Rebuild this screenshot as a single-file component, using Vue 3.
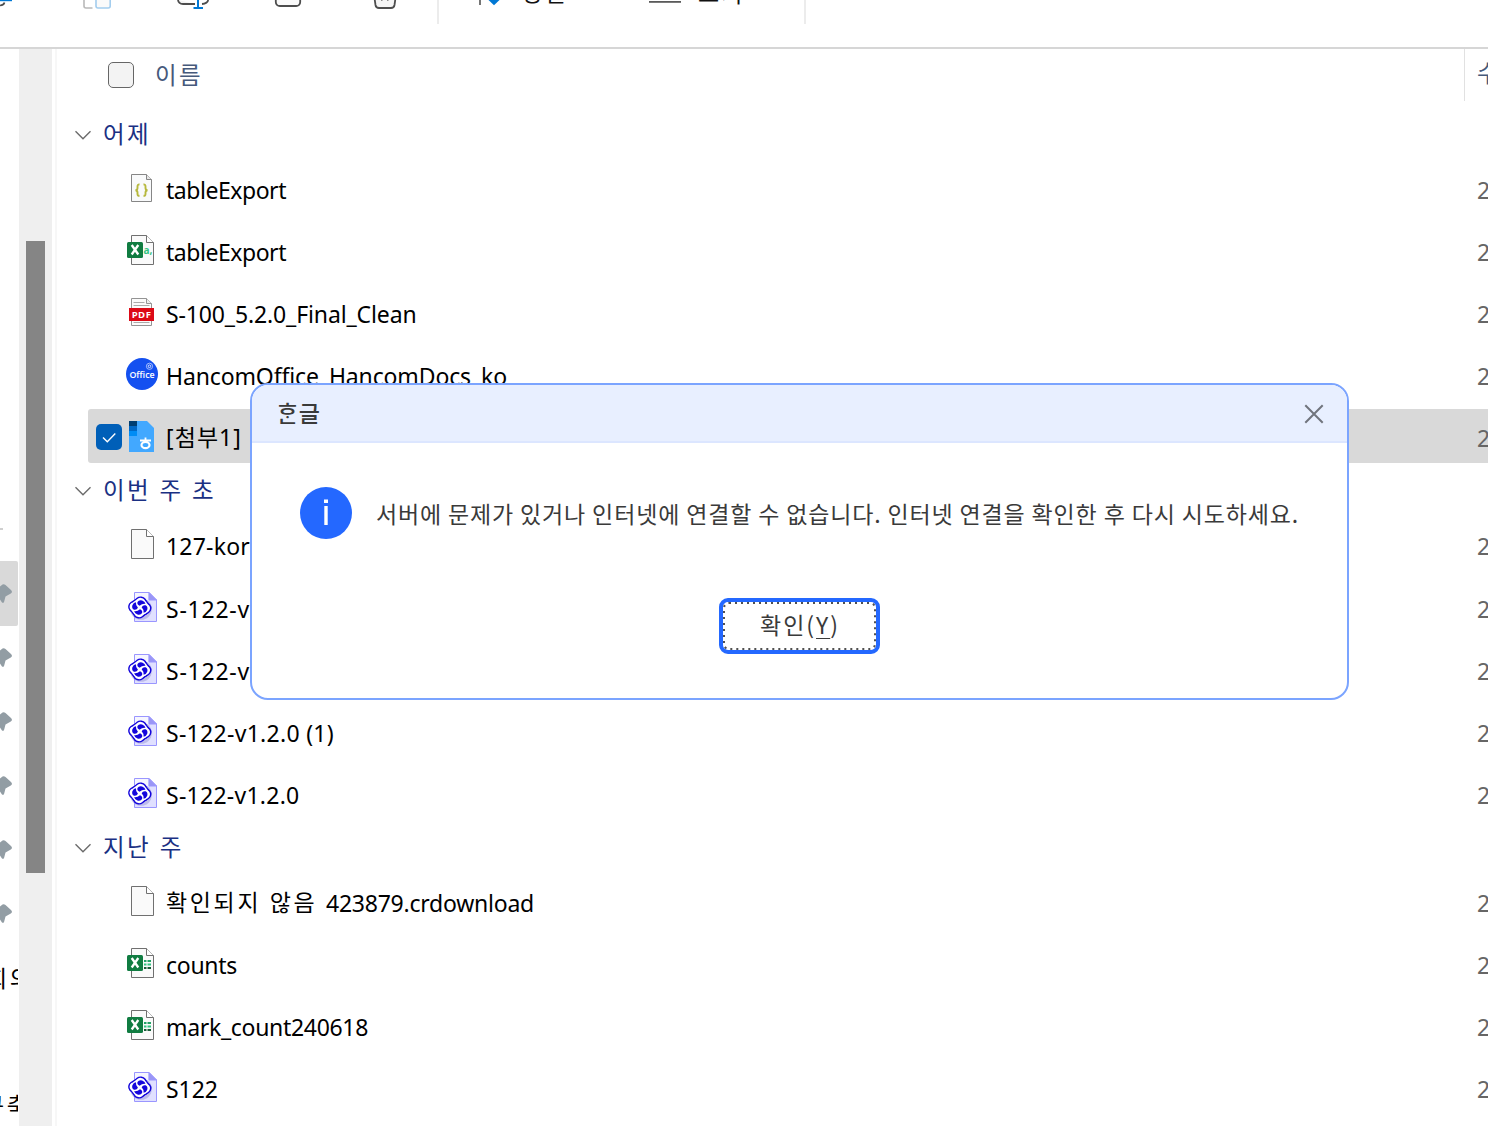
<script setup>
const fit = (el, { value }) => {
  const chars = [...el.textContent].length
  el.style.letterSpacing = '0px'
  const natural = el.getBoundingClientRect().width
  el.style.letterSpacing = (value - natural) / chars + 'px'
}
const vFit = { mounted: fit }

const groups = [
  {
    title: '어제', width: 48,
    rows: [
      { icon: 'json', name: 'tableExport', width: 120 },
      { icon: 'csv', name: 'tableExport', width: 120 },
      { icon: 'pdf', name: 'S-100_5.2.0_Final_Clean', width: 250.5 },
      { icon: 'office', name: 'HancomOffice_HancomDocs_ko', width: 341 },
      { icon: 'hwp', name: '[첨부1]', width: 76, selected: true },
    ],
  },
  {
    title: '이번 주 초', width: 113, loose: true,
    rows: [
      { icon: 'file', name: '127-kor', width: 84 },
      { icon: 'xsd', name: 'S-122-v', width: 84 },
      { icon: 'xsd', name: 'S-122-v', width: 84 },
      { icon: 'xsd', name: 'S-122-v1.2.0 (1)', width: 168 },
      { icon: 'xsd', name: 'S-122-v1.2.0', width: 133.5 },
    ],
  },
  {
    title: '지난 주', width: 81,
    rows: [
      { icon: 'file', korean: '확인되지 않음', name: '423879.crdownload', width: 208 },
      { icon: 'xls', name: 'counts', width: 71 },
      { icon: 'xls', name: 'mark_count240618', width: 202 },
      { icon: 'xsd', name: 'S122', width: 52 },
    ],
  },
]
const petals = [20, 110, 200, 290]
const lobes = [8, 98, 188, 278]
</script>

<template>
  <div class="screen">
    <header class="toolbar">
      <svg class="tools" width="437" height="24" viewBox="0 0 437 24" fill="none">
        <path d="M0 5.500Q4 5 4.500 2.500" stroke="#4d4d4d" stroke-width="1.600" />
        <path d="M0 .3H12" stroke="#0078d4" stroke-width="1.800" />
        <path d="M84 -4V6Q84 8 86 8H92.500" stroke="#b9b9b9" stroke-width="1.600" />
        <rect x="96" y="-12" width="14.200" height="20" rx="2" fill="#fafafa" stroke="#a3cdee" stroke-width="1.600" />
        <path d="M178 0Q178.500 4 183 4H195M202 4Q207.500 3.500 208.200 0" fill="#f3f3f3" stroke="#4d4d4d" stroke-width="1.800" />
        <path d="M198 -4V8M193.500 8H203" stroke="#0078d4" stroke-width="2" />
        <rect x="275.800" y="-16" width="24.400" height="22" rx="4" fill="#fafafa" stroke="#4d4d4d" stroke-width="1.800" />
        <path d="M374.500 -2L375.500 5Q376 8 379 8H391Q394 8 394.500 5L395.500 -2" fill="#f5f5f5" stroke="#4d4d4d" stroke-width="1.800" />
        <path d="M381.800 -2V1M387.800 -2V1" stroke="#777" stroke-width="1.200" />
      </svg>
      <div class="cmd sort">
        <svg width="24" height="8" viewBox="0 0 24 8" fill="none">
          <path d="M1 -2V5" stroke="#666" stroke-width="1.800" />
          <path d="M9.500 0H20.500L15 5.200Z" fill="#0078d4" />
        </svg>
        <span>정렬</span>
      </div>
      <div class="cmd view">
        <svg width="32" height="8" viewBox="0 0 32 8"><path d="M0 1.900H32" stroke="#5a5a5a" stroke-width="1.800" /></svg>
        <span>보기</span>
      </div>
    </header>

    <div class="body">
      <aside class="nav">
        <i class="rule"></i>
        <div class="pins">
          <div v-for="n in 6" :key="n" class="pin" :class="{ on: n === 1 }">
            <svg width="13" height="20" viewBox="0 0 13 20">
              <path d="M0 2.500L2.500 .5Q4 -.3 5.500 1L11 6Q13 8 10.800 9.500L5.500 12.500 4.200 17.500Q3.500 20 1.800 18.200L0 15.500Z" fill="#929da4" />
            </svg>
          </div>
        </div>
        <div class="crumb first"><span>회의</span></div>
        <div class="crumb second"><span>구축</span></div>
      </aside>
      <div class="scroll"><div class="thumb"></div></div>
      <main class="list">
        <div class="columns">
          <i class="box"></i>
          <span v-fit="48" class="label">이름</span>
          <div class="next">수정한 날짜</div>
        </div>
        <section v-for="g in groups" :key="g.title" :class="{ loose: g.loose }">
          <h2>
            <svg width="18" height="12" viewBox="0 0 18 12" fill="none"><path d="M1.500 2.300L9 9.800 16.500 2.300" stroke="#6b6b6b" stroke-width="1.400" /></svg>
            <span v-fit="g.width">{{ g.title }}</span>
          </h2>
          <div v-for="(r, i) in g.rows" :key="i" class="row" :class="{ selected: r.selected }">
            <div class="check">
              <svg v-if="r.selected" width="26" height="26" viewBox="0 0 26 26" fill="none">
                <rect width="26" height="26" rx="5" fill="#005fb8" />
                <path d="M7 13.500L11.300 17.800 19.300 9.500" stroke="#fff" stroke-width="1.400" />
              </svg>
            </div>
            <svg class="icon" width="32" height="34" viewBox="0 0 32 34" fill="none">
              <g v-if="r.icon === 'json'" transform="translate(0 1)">
                <path d="M5.500 2.500H20.500L25.500 7.500V29.500H5.500Z" fill="#f9fafb" stroke="#868686" />
                <path d="M20.500 2.500V7.500H25.500" fill="#e6e6e6" stroke="#868686" />
                <path d="M13.500 12.500Q11.500 12.300 11.500 14.500V16Q11.500 18 9.500 18.200 11.500 18.400 11.500 20.500V22Q11.500 24 13.500 23.800M17.500 12.500Q19.500 12.300 19.500 14.500V16Q19.500 18 21.500 18.200 19.500 18.400 19.500 20.500V22Q19.500 24 17.500 23.800" stroke="#b6b83d" stroke-width="1.900" />
              </g>
              <g v-else-if="r.icon === 'file' || r.icon === 'csv' || r.icon === 'xls'">
                <path d="M5.500 2.500H20.500L27.500 9.500V31.500H5.500Z" fill="#fafafa" stroke="#707070" />
                <path d="M20.500 2.500V9.500H27.500" fill="#fff" stroke="#707070" />
                <g v-if="r.icon !== 'file'">
                  <rect x="1" y="9" width="16" height="16" rx="1.500" fill="#107c41" />
                  <path d="M5.700 12L12.300 21.500M12.300 12L5.700 21.500" stroke="#fff" stroke-width="2.300" />
                  <text v-if="r.icon === 'csv'" x="17.500" y="20.500" class="tiny green">a,</text>
                  <g v-else>
                    <path d="M18 15H20.500M21.500 15H25" stroke="#21a366" stroke-width="2" />
                    <path d="M18 18.500H20.500M21.500 18.500H25" stroke="#33c481" stroke-width="2" />
                    <path d="M18 22H20.500M21.500 22H25" stroke="#185c37" stroke-width="2" />
                  </g>
                </g>
              </g>
              <g v-else-if="r.icon === 'pdf'" transform="translate(0 1)">
                <path d="M5.500 2.500H20.500L25.500 7.500V29.500H5.500Z" fill="#fbfbfb" stroke="#949494" />
                <path d="M20.500 2.500V7.500H25.500" fill="#eee" stroke="#949494" />
                <path d="M7.500 6.500H18.500M7.500 9.500H23.500M7.500 26.500H23.500" stroke="#aaa" />
                <rect x="3" y="12" width="25" height="13" fill="#dc0a17" />
                <text x="15.500" y="22" text-anchor="middle" class="tiny pdf">PDF</text>
              </g>
              <g v-else-if="r.icon === 'office'" transform="translate(0 1)">
                <circle cx="16" cy="16" r="16" fill="#1450f0" />
                <text x="16" y="20" text-anchor="middle" class="tiny office">Office</text>
                <circle cx="23.500" cy="8.300" r="3.100" stroke="#c5d4ff" stroke-width=".8" />
                <circle cx="23.500" cy="8.300" r="1.300" stroke="#fff" stroke-width=".8" />
              </g>
              <g v-else-if="r.icon === 'hwp'" transform="translate(0 1)">
                <path d="M3 1H21L28 8V32H3Z" fill="#42a8ff" />
                <path d="M3 1H11V6H3Z" fill="#003e72" />
                <path d="M3 6H11V11H3Z" fill="#0068c6" />
                <path d="M3 11H11V16H3Z" fill="#008cf5" />
                <path d="M19.500 17.500V20.500M14 20.500H25" stroke="#fff" stroke-width="1.800" />
                <ellipse cx="19.500" cy="25" rx="4" ry="3.200" stroke="#fff" stroke-width="2.200" />
              </g>
              <g v-else>
                <path d="M8.500 2.500H23L30.500 10V31.500H8.500Z" fill="#e0e0ff" stroke="#9a96ff" />
                <path d="M9 3H22V10H9Z" fill="#f6f6ff" />
                <path d="M23 2.500V10H30.500Z" fill="#9a96f5" stroke="#9a96ff" />
                <circle cx="15" cy="19" r="10.800" fill="#9895d8" opacity=".5" />
                <g transform="translate(13.800 17.500) scale(1.040 .98) translate(-13.800 -17.500)">
                  <g fill="#1405dc">
                    <circle cx="13.800" cy="17.500" r="9.600" />
                    <circle v-for="a in lobes" :key="a" cx="13.800" cy="12.300" r="6.100" :transform="`rotate(${a} 13.800 17.500)`" />
                  </g>
                  <g fill="#fff">
                    <circle cx="13.800" cy="17.500" r="8.300" />
                    <circle v-for="a in lobes" :key="a" cx="13.800" cy="12.300" r="4.700" :transform="`rotate(${a} 13.800 17.500)`" />
                  </g>
                  <path v-for="a in petals" :key="a" d="M13 15.900Q10 15.600 9.800 13Q10.200 10.300 13.500 10Q16.800 10.100 17.600 12.200Q14.600 12.800 13 15.900Z" fill="#1405dc" :transform="`rotate(${a} 13.800 17.500)`" />
                </g>
              </g>
            </svg>
            <span v-if="r.korean" v-fit="160" class="name korean">{{ r.korean }}&nbsp;</span>
            <span v-fit="r.width" class="name" :class="{ joined: r.korean, korean: r.icon === 'hwp' }">{{ r.name }}</span>
            <span class="date">2025-01-10</span>
          </div>
        </section>
      </main>
    </div>

    <div class="dialog">
      <div class="title">
        <span v-fit="45">ᄒᆞᆫ글</span>
        <svg width="20" height="20" viewBox="0 0 20 20"><path d="M1.300 1.300L18.700 18.700M18.700 1.300L1.300 18.700" stroke="#70747d" stroke-width="2" /></svg>
      </div>
      <div class="message">
        <svg width="52" height="52" viewBox="0 0 52 52">
          <circle cx="26" cy="26" r="26" fill="#2468ff" />
          <path d="M24 12.500H28V16H24ZM24.300 19H27.700V38H24.300Z" fill="#fff" />
        </svg>
        <p><span v-fit="923">서버에 문제가 있거나 인터넷에 연결할 수 없습니다. 인터넷 연결을 확인한 후 다시 시도하세요.</span></p>
      </div>
      <button>
        <svg class="focus" width="153" height="48" viewBox="0 0 153 48" fill="none"><rect x="1" y="1" width="151" height="46" rx="5" stroke="#505050" stroke-width="2" stroke-dasharray="2 4" /></svg>
        <span v-fit="80">확인(<u>Y</u>)</span>
      </button>
    </div>
  </div>
</template>

<style>
body { margin: 0; background: #fff; }
</style>

<style scoped>
* { box-sizing: border-box; }
.screen {
  position: relative;
  display: flex;
  flex-direction: column;
  width: 1488px;
  height: 1126px;
  overflow: hidden;
  background: #fff;
  color: #000;
  font-family: "Noto Sans", "Noto Sans CJK KR", sans-serif;
  font-size: 23px;
  white-space: nowrap;
}
.toolbar {
  display: flex;
  align-items: flex-start;
  flex: 0 0 49px;
  overflow: hidden;
  border-bottom: 2px solid #d6d6d6;
}
.tools { flex: none; }
.cmd { display: flex; align-items: flex-start; height: 24px; color: #111; }
.cmd svg { flex: none; }
.cmd span { line-height: 32px; margin-top: -24px; letter-spacing: 2px; }
.sort { width: 211px; padding-left: 40px; border-left: 2px solid #ececec; gap: 18px; }
.view { width: 158px; padding-left: 1px; border-right: 2px solid #ececec; gap: 17px; }
.view span { margin-top: -23px; }
.body { display: flex; flex: 1; min-height: 0; }
.nav { width: 19px; overflow: hidden; flex: none; padding-top: 479px; }
.rule { display: block; width: 3px; height: 2px; background: #cfcfcf; }
.pins { margin-top: 31px; }
.pin { display: flex; width: 18px; height: 64px; padding-top: 23px; }
.pin.on { height: 65px; margin-bottom: -1px; background: #d9d9d9; border-radius: 0 2px 2px 0; }
.crumb { display: flex; justify-content: flex-start; width: 18px; height: 34px; line-height: 34px; overflow: hidden; }
.crumb span { margin-left: -14px; letter-spacing: 2.500px; }
.first { margin-top: 16px; }
.second { margin-top: 93px; }
.second span { margin-left: -17px; }
.scroll { width: 33px; flex: none; background: #efefef; padding: 192px 7px 0; }
.thumb { height: 632px; background: #858585; }
.list { flex: 1; min-width: 0; margin-left: 3px; border-left: 2px solid #f7f7f7; overflow: hidden; }
.columns { display: flex; align-items: center; height: 52px; margin-bottom: 14px; padding-left: 51px; color: #46597b; font-size: 23.500px; }
.box { width: 26px; height: 26px; border: 1.500px solid #666; border-radius: 5px; background: #f3f3f3; }
.label { margin: -2px 0 0 21px; }
.next { align-self: stretch; width: 24px; margin-left: auto; padding-left: 12px; border-left: 1px solid #e1e1e1; line-height: 49px; overflow: hidden; }
h2 { display: flex; align-items: center; height: 38px; margin: 0 0 8px 17px; gap: 11px; font-size: 23.500px; font-weight: 400; color: #1a3083; }
h2 span { margin-top: -2px; }
h2 svg { margin-top: 1px; }
.row { display: flex; align-items: center; height: 54px; margin: 0 0 8px 31px; padding-left: 8px; }
.selected { background: #d9d9d9; border-radius: 3px 0 0 3px; }
.loose .row:nth-of-type(1) { margin-bottom: 9px; }
.check { width: 26px; height: 26px; flex: none; margin: 2px 4px 0 0; }
.check svg { display: block; }
.icon { flex: none; }
.name { margin: 4px 0 0 8px; line-height: 32px; }
.korean { margin-top: 2px; }
.joined { margin-left: 0; }
.date { width: 11px; margin: 4px 0 0 auto; color: #666; overflow: hidden; line-height: 32px; }
.tiny { font-family: "Open Sans", sans-serif; font-weight: 700; fill: #fff; }
.green { font-size: 10px; fill: #33c481; }
.pdf { font-size: 9.500px; letter-spacing: .5px; }
.office { font-size: 8.800px; font-weight: 600; }
.dialog {
  position: absolute;
  left: 250px;
  top: 383px;
  width: 1099px;
  height: 317px;
  border: 2px solid #7ba4ff;
  border-radius: 18px;
  background: #fff;
  overflow: hidden;
  display: flex;
  flex-direction: column;
  color: #3a3a3a;
  font-family: "Noto Sans CJK KR", sans-serif;
}
.title { display: flex; align-items: center; justify-content: space-between; height: 58px; padding: 0 23px 0 25px; background: #e8efff; border-bottom: 2px solid #dce6ff; }
.title span { margin-top: -2px; font-weight: 500; }
.title svg { margin-top: 2px; }
.message { display: flex; align-items: center; gap: 24px; margin: 44px 0 0 48px; height: 52px; }
.message p { margin: 0; }
.message svg { flex: none; }
button {
  position: relative;
  display: flex;
  align-items: center;
  justify-content: center;
  width: 161px;
  height: 56px;
  margin: 59px 0 0 467px;
  padding: 0 0 4px 1px;
  border: 4px solid #2468ff;
  border-radius: 9px;
  background: #fff;
  color: #3a3a3a;
  font: inherit;
}
.focus { position: absolute; left: 0; top: 0; }
u { text-decoration-thickness: 1px; text-underline-offset: 4px; }
</style>
